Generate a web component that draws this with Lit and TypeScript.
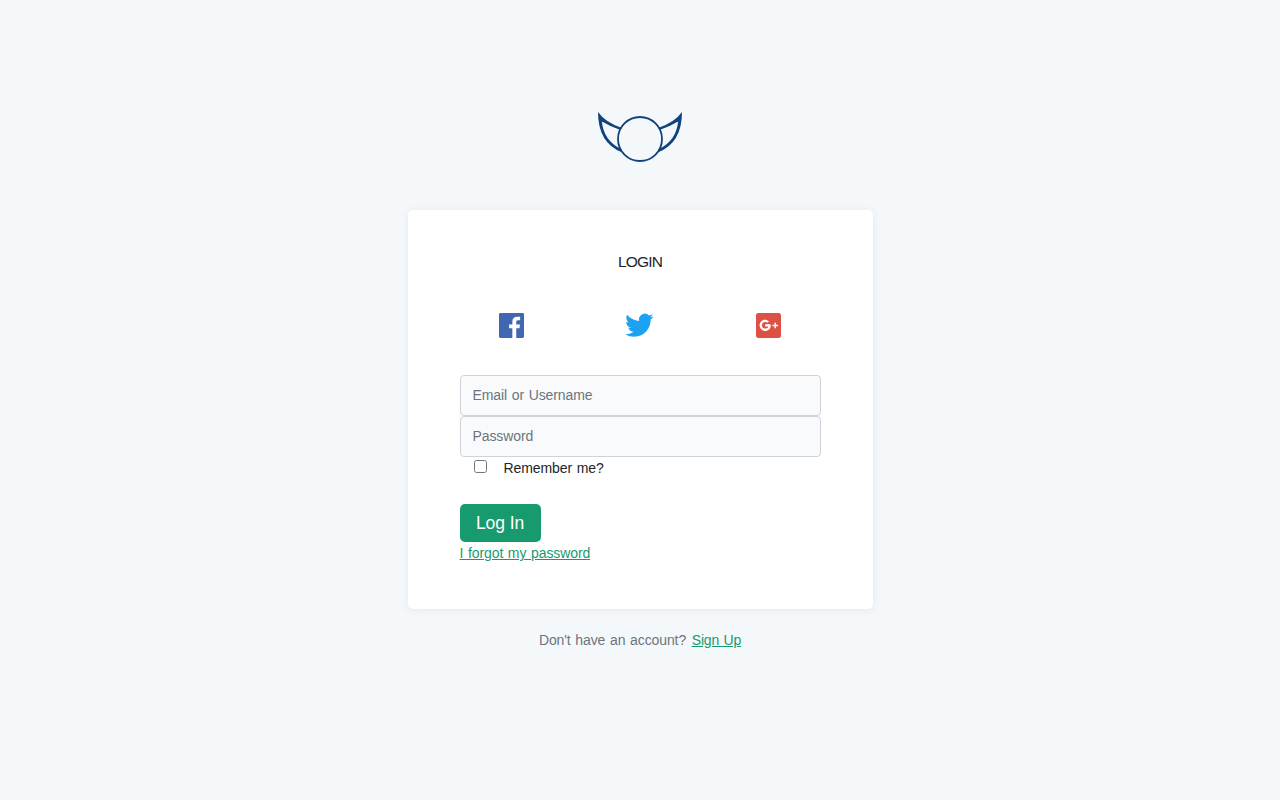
import { LitElement, css, html, svg } from 'lit'
import { customElement, property } from 'lit/decorators.js'

const ICONS = {
    facebook: {
        color: '#4267b2',
        shape: svg`<path transform="translate(2 2) scale(1.0417)" d="M22.676 0H1.324C.593 0 0 .593 0 1.324v21.352C0 23.408.593 24 1.324 24h11.494v-9.294H9.689v-3.621h3.129V8.41c0-3.099 1.894-4.785 4.659-4.785 1.325 0 2.464.097 2.796.141v3.24h-1.921c-1.5 0-1.792.721-1.792 1.771v2.311h3.584l-.465 3.63H16.56V24h6.115c.733 0 1.325-.592 1.325-1.324V1.324C24 .593 23.408 0 22.676 0"/>`,
    },
    twitter: {
        color: '#1da1f2',
        shape: svg`<path transform="translate(.2 .1) scale(1.18)" d="M23.953 4.57a10 10 0 01-2.825.775 4.958 4.958 0 002.163-2.723c-.951.555-2.005.959-3.127 1.184a4.92 4.92 0 00-8.384 4.482C7.69 8.095 4.067 6.13 1.64 3.162a4.822 4.822 0 00-.666 2.475c0 1.71.87 3.213 2.188 4.096a4.904 4.904 0 01-2.228-.616v.06a4.923 4.923 0 003.946 4.827 4.996 4.996 0 01-2.212.085 4.936 4.936 0 004.604 3.417 9.867 9.867 0 01-6.102 2.105c-.39 0-.779-.023-1.17-.067a13.995 13.995 0 007.557 2.209c9.053 0 13.998-7.496 13.998-13.985 0-.21 0-.42-.015-.63A9.935 9.935 0 0024 4.59z"/>`,
    },
    google: {
        color: '#dd5144',
        shape: svg`
            <rect x="3" y="2" width="25" height="25" rx="2.5"/>
            <path transform="translate(6 4.3)" fill="#fff" d="M6.2 8.9v2.2h3.1c-.3 1.3-1.4 2.2-3.1 2.2a3.3 3.3 0 010-6.6c.9 0 1.6.3 2.2.8L10 5.9A5.6 5.6 0 106.2 15.6c3.3 0 5.5-2.3 5.5-5.5 0-.4 0-.8-.1-1.2z"/>
            <path fill="#fff" d="M21.5 11.7H23v2h2v1.5h-2v2h-1.5v-2h-2v-1.5h2z"/>`,
    },
}

@customElement('winged-logo')
class WingedLogo extends LitElement {
    static styles = css`
        :host {
            display: block;
            height: 50px;
        }

        svg {
            display: block;
        }
    `

    render() {
        const wing = svg`<path d="M0 0Q7 10 23.4 15.8L21.9 17.7Q11.5 14.3 3.9 9.6Q5.5 28 22.3 36.8L23.8 40.2Q0 31 0 0Z"/>`
        return html`
            <svg width="84" height="50" viewBox="0 0 84 50" fill="#10427c" role="img" aria-label="Logo">
                ${wing}
                <g transform="matrix(-1 0 0 1 84 0)">${wing}</g>
                <circle cx="42" cy="27" r="22" fill="#f4f8fb" stroke="#10427c" stroke-width="1.8"/>
            </svg>
        `
    }
}

@customElement('social-link')
class SocialLink extends LitElement {
    @property({ type: String }) name: keyof typeof ICONS = 'facebook'

    static styles = css`
        :host {
            display: flex;
            justify-content: center;
        }

        svg {
            display: block;
            overflow: visible;
        }
    `

    render() {
        const icon = ICONS[this.name]
        return html`
            <svg width="28" height="28" viewBox="0 0 28 28" fill=${icon.color} role="img" aria-label=${this.name}>
                ${icon.shape}
            </svg>
        `
    }
}

@customElement('app-root')
class AppRoot extends LitElement {
    static styles = css`
        :host {
            display: flex;
            flex-direction: column;
            align-items: center;
            box-sizing: border-box;
            min-height: 100vh;
            padding-top: 112px;
            background: #f4f8fb;
            color: #212529;
            font-family: 'Liberation Sans', Arial, sans-serif;
            font-size: 14px;
            line-height: 21px;
            letter-spacing: -0.1px;
            word-spacing: 0.9px;
        }

        .card {
            box-sizing: border-box;
            width: 465px;
            height: 399px;
            margin-top: 48px;
            padding: 41px 52px 0;
            background: #fff;
            border-radius: 5px;
            box-shadow: 0 1px 8px rgba(24, 50, 70, 0.08);
        }

        h1 {
            margin: 0;
            font-size: 15.5px;
            font-weight: 400;
            line-height: 22px;
            letter-spacing: -0.8px;
            text-align: center;
        }

        .social {
            display: grid;
            grid-template-columns: repeat(3, 1fr);
            width: 384px;
            margin: 38px -12.5px 36px;
        }

        .field {
            display: block;
            box-sizing: border-box;
            width: 100%;
            height: 41px;
            margin: 0;
            padding: 0 12px 2px;
            border: 1px solid #ced4da;
            border-radius: 4px;
            background: #f8fafc;
            color: #495057;
            font: inherit;
            letter-spacing: inherit;
            word-spacing: inherit;
        }

        .field::placeholder {
            color: #6c757d;
            opacity: 1;
        }

        .remember {
            display: flex;
            align-items: flex-start;
            padding-top: 1px;
        }

        .remember input {
            width: 13px;
            height: 13px;
            margin: 2px 17px 0 14px;
        }

        .submit {
            display: block;
            height: 38px;
            width: 81px;
            margin-top: 25px;
            padding: 0;
            border: 0;
            border-radius: 5px;
            background: #189a6f;
            color: #fff;
            font: inherit;
            font-size: 17.5px;
            letter-spacing: -0.1px;
        }

        a {
            color: #189a6f;
            text-decoration: underline;
        }

        .forgot {
            display: inline-block;
            margin-top: 1px;
        }

        .signup {
            margin: 21px 0 0;
            color: #6c757d;
        }

        .signup a {
            margin-left: 1px;
            letter-spacing: -0.2px;
        }
    `

    render() {
        return html`
            <winged-logo></winged-logo>
            <form class="card">
                <h1>LOGIN</h1>
                <div class="social">
                    <social-link name="facebook"></social-link>
                    <social-link name="twitter"></social-link>
                    <social-link name="google"></social-link>
                </div>
                <input class="field" type="text" placeholder="Email or Username">
                <input class="field" type="password" placeholder="Password">
                <label class="remember"><input type="checkbox">Remember me?</label>
                <button class="submit" type="button">Log In</button>
                <a class="forgot" href="#">I forgot my password</a>
            </form>
            <p class="signup">Don't have an account? <a href="#">Sign Up</a></p>
        `
    }
}
